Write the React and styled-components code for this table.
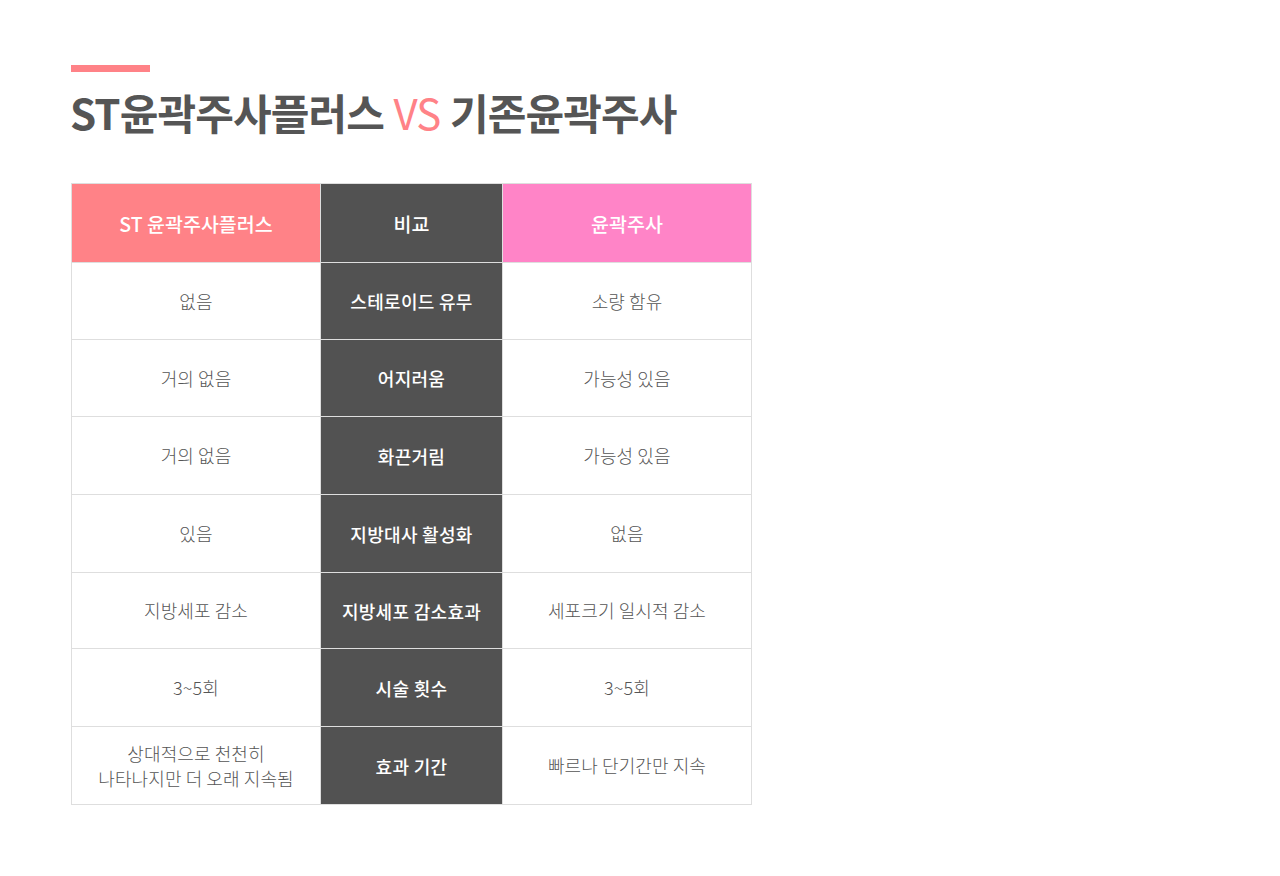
import React from 'react';
import styled, { createGlobalStyle } from 'styled-components';

const GlobalStyle = createGlobalStyle`
  html, body {
    margin: 0;
    padding: 0;
    background: #fff;
  }
  body {
    font-family: "Noto Sans CJK KR", "Noto Sans", sans-serif;
    color: #555;
  }
`;

const rows = [
	{ left: '없음', label: '스테로이드 유무', right: '소량 함유', h: 77 },
	{ left: '거의 없음', label: '어지러움', right: '가능성 있음', h: 77 },
	{ left: '거의 없음', label: '화끈거림', right: '가능성 있음', h: 78 },
	{ left: '있음', label: '지방대사 활성화', right: '없음', h: 78 },
	{ left: '지방세포 감소', label: '지방세포 감소효과', right: '세포크기 일시적 감소', h: 76 },
	{ left: '3~5회', label: '시술 횟수', right: '3~5회', h: 78 },
	{ left: ['상대적으로 천천히', '나타나지만 더 오래 지속됨'], label: '효과 기간', right: '빠르나 단기간만 지속', h: 78 },
];

const App = () => {
	return (
		<Page>
			<GlobalStyle />
			<Accent />
			<Title>
				ST윤곽주사플러스 <Vs>VS</Vs> 기존윤곽주사
			</Title>
			<Table>
				<thead>
					<tr>
						<Head tone="#ff8287">ST 윤곽주사플러스</Head>
						<Head tone="#525252">비교</Head>
						<Head tone="#ff84c7">윤곽주사</Head>
					</tr>
				</thead>
				<tbody>
					{rows.map((r, i) => (
						<Row key={i} h={r.h}>
							<Cell>
								{Array.isArray(r.left)
									? r.left.map((l, j) => <Line key={j}>{l}</Line>)
									: r.left}
							</Cell>
							<Label>{r.label}</Label>
							<Cell>{r.right}</Cell>
						</Row>
					))}
				</tbody>
			</Table>
		</Page>
	);
};

export default App;

const Page = styled.div`
	padding: 65px 0 0 71px;
`;

const Accent = styled.div`
	width: 79px;
	height: 7px;
	background: #ff8287;
`;

const Title = styled.h1`
	margin: 15px 0 0 -1px;
	font-size: 42px;
	line-height: 50px;
	font-weight: 700;
	letter-spacing: -0.9px;
	word-spacing: 1px;
	color: #555;
	white-space: nowrap;
`;

const Vs = styled.span`
	color: #ff8287;
	font-weight: 400;
`;

const Table = styled.table`
	margin-top: 46px;
	border-collapse: collapse;
	table-layout: fixed;
	width: 681px;
	border: 1px solid #dedede;
`;

const Head = styled.th`
	height: 78px;
	background: ${props => props.tone};
	color: #fff;
	font-size: 19.5px;
	font-weight: 500;
	letter-spacing: 0;
	border: 1px solid #dedede;
	padding: 0;
	&:nth-child(1) { width: 248px; }
	&:nth-child(2) { width: 181px; }
`;

const Row = styled.tr`
	height: ${props => props.h}px;
`;

const Cell = styled.td`
	border: 1px solid #dedede;
	text-align: center;
	font-size: 18px;
	font-weight: 300;
	letter-spacing: 0.1px;
	color: #555;
	padding: 0;
	line-height: 25px;
`;

const Line = styled.div``;

const Label = styled.td`
	border: 1px solid #dedede;
	background: #525252;
	color: #fff;
	text-align: center;
	font-size: 18px;
	font-weight: 500;
	letter-spacing: 0.3px;
	padding: 0;
`;
